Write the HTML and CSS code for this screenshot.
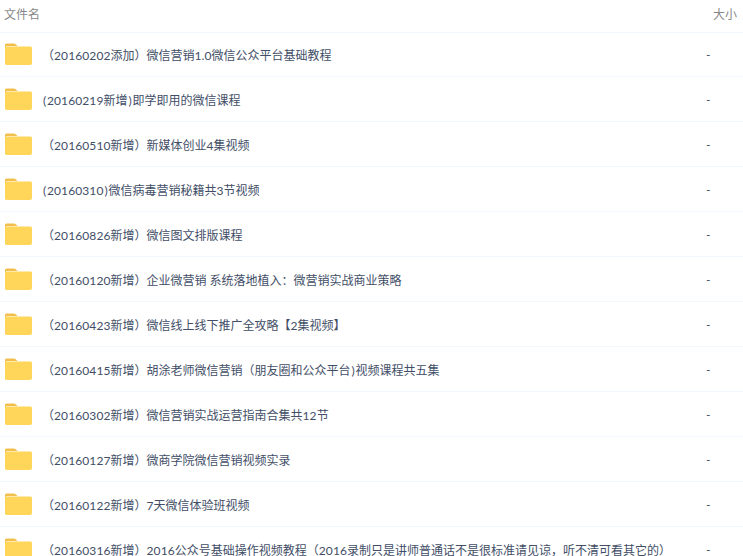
FILE: index.html
```html
<!DOCTYPE html>
<html lang="zh-CN">
<head>
<meta charset="utf-8">
<title>文件列表</title>
<link rel="stylesheet" href="styles.css">
</head>
<body>
<svg class="defs" width="0" height="0"><defs><symbol id="folder" viewBox="0 0 27 22"><path d="M1 21.500Q0 21.500 0 20V2Q0 .5 1.500 .5H8.500Q10 .5 11 1.500L12.500 3H1z" fill="#f3bf4c"/><path d="M0 5Q0 3.500 1.500 3.500H25.500Q27 3.500 27 5V20Q27 22 25 22H2Q0 22 0 20z" fill="#ffd659"/></symbol></defs></svg>
<div class="head"><span>文件名</span><span class="size-head">大小</span></div>
<ul class="list">
<li class="row"><svg class="icon"><use href="#folder"/></svg><span class="name">（<span class="num">20160202</span>添加）微信营销<span class="num">1.0</span>微信公众平台基础教程</span><span class="size">-</span></li>
<li class="row"><svg class="icon"><use href="#folder"/></svg><span class="name"><span class="paren">(</span><span class="num">20160219</span>新增<span class="paren">)</span>即学即用的微信课程</span><span class="size">-</span></li>
<li class="row"><svg class="icon"><use href="#folder"/></svg><span class="name">（<span class="num">20160510</span>新增）新媒体创业4集视频</span><span class="size">-</span></li>
<li class="row"><svg class="icon"><use href="#folder"/></svg><span class="name"><span class="paren">(</span><span class="num">20160310</span><span class="paren">)</span>微信病毒营销秘籍共3节视频</span><span class="size">-</span></li>
<li class="row"><svg class="icon"><use href="#folder"/></svg><span class="name">（<span class="num">20160826</span>新增）微信图文排版课程</span><span class="size">-</span></li>
<li class="row"><svg class="icon"><use href="#folder"/></svg><span class="name">（<span class="num">20160120</span>新增）企业微营销 系统落地植入：微营销实战商业策略</span><span class="size">-</span></li>
<li class="row"><svg class="icon"><use href="#folder"/></svg><span class="name">（<span class="num">20160423</span>新增）微信线上线下推广全攻略【2集视频】</span><span class="size">-</span></li>
<li class="row"><svg class="icon"><use href="#folder"/></svg><span class="name">（<span class="num">20160415</span>新增）胡涂老师微信营销（朋友圈和公众平台<span class="paren">)</span>视频课程共五集</span><span class="size">-</span></li>
<li class="row"><svg class="icon"><use href="#folder"/></svg><span class="name">（<span class="num">20160302</span>新增）微信营销实战运营指南合集共<span class="num">12</span>节</span><span class="size">-</span></li>
<li class="row"><svg class="icon"><use href="#folder"/></svg><span class="name">（<span class="num">20160127</span>新增）微商学院微信营销视频实录</span><span class="size">-</span></li>
<li class="row"><svg class="icon"><use href="#folder"/></svg><span class="name">（<span class="num">20160122</span>新增）7天微信体验班视频</span><span class="size">-</span></li>
<li class="row"><svg class="icon"><use href="#folder"/></svg><span class="name">（<span class="num">20160316</span>新增）<span class="num">2016</span>公众号基础操作视频教程（<span class="num">2016</span>录制只是讲师普通话不是很标准请见谅，听不清可看其它的）</span><span class="size">-</span></li>
</ul>
</body>
</html>
```
FILE: styles.css
```css
html, body { margin: 0; padding: 0; height: 100%; overflow: hidden; background: #fff; }
body { font: 12px/1 "Lato", "Noto Sans CJK SC", sans-serif; color: #424e67; }
.defs { position: absolute; }
.head { height: 33px; display: flex; justify-content: space-between; align-items: flex-start; padding: 8px 6px 0 4px; box-sizing: border-box; color: #888; line-height: 14px; border-bottom: 1px solid #f2f6fd; }
.list { list-style: none; margin: -1px 0 0; padding: 0; }
.row { height: 45px; box-sizing: border-box; display: flex; align-items: center; border-bottom: 1px solid #f2f6fd; padding: 1px 0 0 5px; }
.icon { width: 27px; height: 22px; flex: none; margin-top: -2px; }
.name { margin-left: 10px; padding-top: 2px; flex: 1; white-space: nowrap; line-height: 16px; min-width: 0; }
.num { letter-spacing: .1px; }
.paren { padding: 0 .9px; }
.size { width: 37px; flex: none; color: #424e67; }
```
